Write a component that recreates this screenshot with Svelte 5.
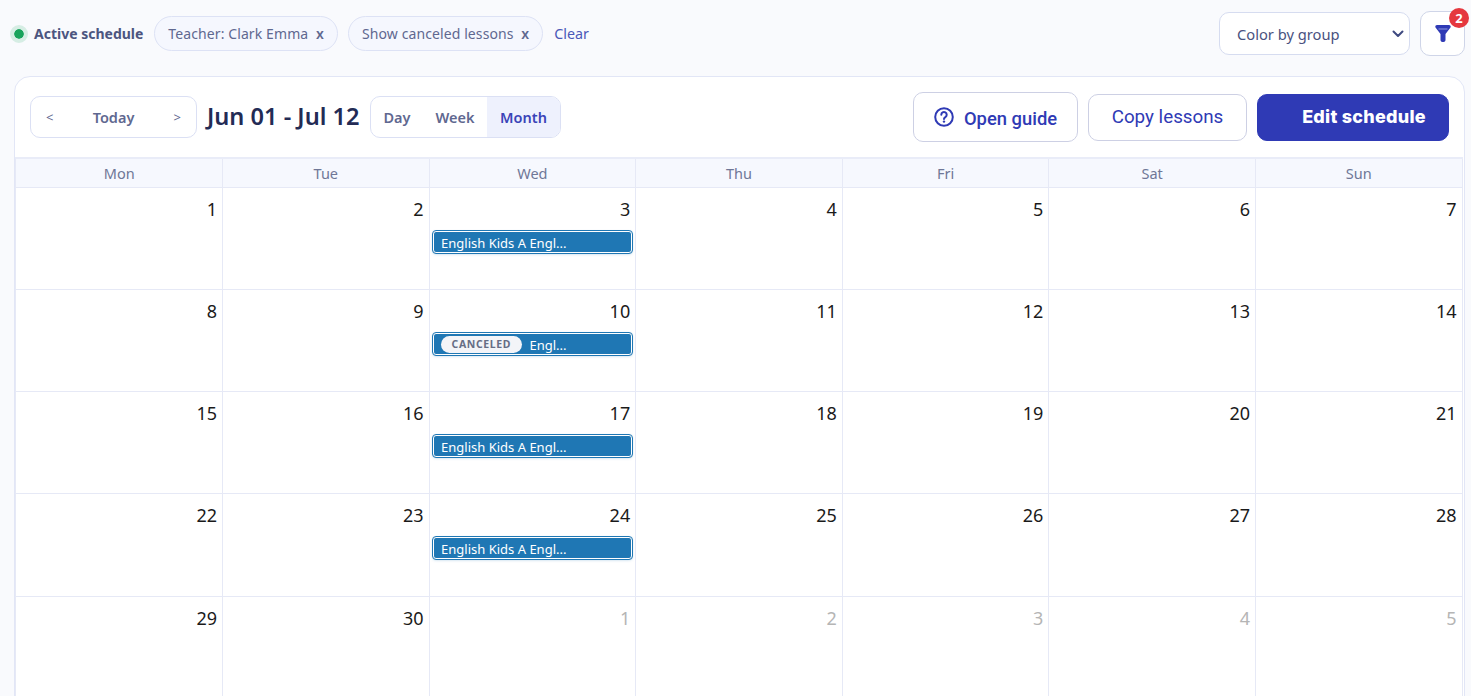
<script>
  const weekdays = ['Mon', 'Tue', 'Wed', 'Thu', 'Fri', 'Sat', 'Sun'];

  const lessons = {
    3: { title: 'English Kids A Engl...' },
    10: { title: 'Engl...', canceled: true },
    17: { title: 'English Kids A Engl...' },
    24: { title: 'English Kids A Engl...' }
  };

  const days = [];
  for (let d = 1; d <= 30; d++) days.push({ n: d, muted: false, lesson: lessons[d] });
  for (let d = 1; d <= 5; d++) days.push({ n: d, muted: true });
</script>

<div class="page">
  <div class="toolbar">
    <div class="filters">
      <span class="dot"></span>
      <span class="active-label">Active schedule</span>
      <span class="chip">Teacher: Clark Emma <b>x</b></span>
      <span class="chip">Show canceled lessons <b>x</b></span>
      <span class="clear">Clear</span>
    </div>
    <div class="right">
      <div class="select">
        <span>Color by group</span>
        <svg width="12" height="8" viewBox="0 0 12 8"><path d="M1.500 1.500 6 6l4.500-4.500" fill="none" stroke="#3f4a80" stroke-width="2" stroke-linecap="round" stroke-linejoin="round"/></svg>
      </div>
      <button class="filter-btn" aria-label="Filters">
        <svg width="16" height="17" viewBox="0 0 16 17"><path d="M2 0h12c1.500 0 2.200 1.600 1.300 2.800L10.500 9v6c0 1-.9 2-2 2h-1c-1.100 0-2-1-2-2V9L.7 2.800C-.2 1.600.5 0 2 0Z" fill="#2f3ab5"/><rect x="3.500" y="3.500" width="9" height="1" fill="#8f97de"/></svg>
        <span class="badge">2</span>
      </button>
    </div>
  </div>

  <div class="card">
    <div class="head">
      <div class="nav">
        <span class="arrow">&lt;</span>
        <span class="today">Today</span>
        <span class="arrow">&gt;</span>
      </div>
      <h2>Jun 01 - Jul 12</h2>
      <div class="views">
        <span>Day</span>
        <span>Week</span>
        <span class="on">Month</span>
      </div>
      <div class="actions">
        <button class="btn guide">
          <svg width="20" height="20" viewBox="0 0 20 20" fill="none" stroke="#2f3ab5" stroke-width="2"><circle cx="10" cy="10" r="8.800"/><path d="M7.300 7.800a2.700 2.700 0 1 1 4.100 2.300c-.9.6-1.400 1-1.400 2" stroke-linecap="round"/><circle cx="10" cy="14.600" r="1.200" fill="#2f3ab5" stroke="none"/></svg>
          Open guide
        </button>
        <button class="btn copy">Copy lessons</button>
        <button class="btn edit">Edit schedule</button>
      </div>
    </div>

    <div class="weekdays">
      {#each weekdays as w}
        <div class="wd">{w}</div>
      {/each}
    </div>
    <div class="grid">
      {#each days as day}
        <div class="cell">
          <div class="num" class:muted={day.muted}>{day.n}</div>
          {#if day.lesson}
            <div class="lesson">
              {#if day.lesson.canceled}<span class="canceled">CANCELED</span>{/if}
              <span>{day.lesson.title}</span>
            </div>
          {/if}
        </div>
      {/each}
    </div>
  </div>
</div>

<style>
  :global(body) {
    margin: 0;
    background: #f9fafd;
    font-family: "Noto Sans", "Open Sans", sans-serif;
    overflow: hidden;
  }

  .page {
    height: 696px;
    overflow: hidden;
  }

  .toolbar {
    height: 76px;
    display: flex;
    justify-content: space-between;
    padding: 11px 6px 0 10px;
    box-sizing: border-box;
  }

  .filters {
    display: flex;
    align-items: center;
    height: 45px;
  }

  .dot {
    flex: none;
    width: 10px;
    height: 10px;
    border: 4px solid #d6ede4;
    border-radius: 50%;
    background: #19a35c;
    background-clip: padding-box;
  }

  .active-label {
    margin-left: 6px;
    margin-right: 1px;
    font-size: 14px;
    font-weight: 700;
    color: #4c5580;
  }

  .chip {
    margin-left: 10px;
    height: 35px;
    padding: 0 13px;
    display: flex;
    align-items: center;
    gap: 4px;
    box-sizing: border-box;
    border: 1px solid #dde2f5;
    border-radius: 18px;
    background: #f5f7fe;
    font-size: 14px;
    letter-spacing: 0.1px;
    color: #5f6890;
    white-space: pre;
  }

  .chip b {
    font-weight: 600;
    color: #5f6890;
  }

  .clear {
    margin-left: 11px;
    font-size: 14.300px;
    color: #4b59b8;
  }

  .right {
    display: flex;
    gap: 10px;
    align-items: flex-start;
  }

  .select {
    margin-top: 1px;
    width: 191px;
    height: 43px;
    box-sizing: border-box;
    padding: 1px 5px 0 17px;
    display: flex;
    align-items: center;
    justify-content: space-between;
    background: #fff;
    border: 1px solid #d6dcf0;
    border-radius: 10px;
    font-size: 14.700px;
    color: #4a5280;
  }

  .filter-btn {
    position: relative;
    width: 45px;
    height: 45px;
    padding: 0;
    display: flex;
    align-items: center;
    justify-content: center;
    background: #fff;
    border: 1px solid #cfd5e8;
    border-radius: 10px;
  }

  .badge {
    position: absolute;
    top: -4px;
    right: -5px;
    width: 20px;
    height: 20px;
    border-radius: 50%;
    background: #e5383f;
    color: #fff;
    font-family: "Noto Sans", sans-serif;
    font-size: 13px;
    font-weight: 700;
    line-height: 20px;
    text-align: center;
  }

  .card {
    margin: 0 6px 0 14px;
    background: #fff;
    border: 1px solid #e2e6f6;
    border-radius: 16px 16px 0 0;
    height: 640px;
    box-sizing: border-box;
    overflow: hidden;
  }

  .head {
    height: 80px;
    display: flex;
    align-items: center;
    padding: 0 15px;
  }

  .nav {
    width: 167px;
    height: 42px;
    box-sizing: border-box;
    display: flex;
    align-items: center;
    justify-content: space-between;
    padding: 0 15px;
    border: 1px solid #dbe0f4;
    border-radius: 10px;
    font-size: 14.500px;
    color: #5f6890;
  }

  .today {
    font-weight: 600;
  }

  .arrow {
    font-size: 13px;
  }

  h2 {
    margin: 0 10px;
    width: 153px;
    font-size: 23.600px;
    font-weight: 600;
    line-height: 1;
    color: #232b55;
    white-space: nowrap;
  }

  .views {
    display: flex;
    height: 42px;
    box-sizing: border-box;
    border: 1px solid #dbe0f4;
    border-radius: 10px;
    overflow: hidden;
    font-size: 14.500px;
    font-weight: 600;
    color: #5f6890;
  }

  .views span {
    display: flex;
    align-items: center;
    padding: 0 12.500px;
  }

  .views .on {
    background: #eef1fd;
    color: #3a44b8;
    padding: 0 13px;
  }

  .actions {
    margin-left: auto;
    display: flex;
    align-items: center;
    gap: 10px;
  }

  .btn {
    box-sizing: border-box;
    height: 47px;
    font-family: Roboto, sans-serif;
    font-size: 18.800px;
    border-radius: 10px;
    background: #fff;
    color: #2f3ab5;
    border: 1px solid #cdd0e4;
    padding: 0;
  }

  .guide {
    width: 165px;
    height: 50px;
    display: flex;
    align-items: center;
    justify-content: center;
    gap: 10px;
    font-size: 18.400px;
    font-weight: 500;
    padding: 2px 0 0;
  }

  .guide svg {
    margin-top: -2px;
  }

  .copy {
    width: 159px;
  }

  .edit {
    width: 192px;
    background: #2f3ab5;
    border-color: #2f3ab5;
    color: #fff;
    font-family: Inter, Roboto, sans-serif;
    font-size: 18px;
    font-weight: 800;
    letter-spacing: 0.25px;
    padding: 0 0 2px 22px;
  }

  .weekdays {
    display: grid;
    grid-template-columns: repeat(7, 1fr);
    height: 30.800px;
    box-sizing: border-box;
    border-top: 2px solid #e9ecf8;
    border-bottom: 1px solid #e6e9f6;
    border-left: 1px solid #e6e9f6;
    margin-right: 1.400px;
    padding-left: 0.400px;
    background: #f6f8fe;
    font-size: 14.500px;
    color: #6f7797;
  }

  .wd {
    display: flex;
    align-items: center;
    justify-content: center;
    border-right: 1px solid #e6e9f6;
  }

  .grid {
    display: grid;
    grid-template-columns: repeat(7, 1fr);
    grid-auto-rows: 102.200px;
    border-left: 1px solid #e6e9f6;
    margin-right: 1.400px;
    padding-left: 0.400px;
  }

  .cell {
    border-right: 1px solid #e6e9f6;
    border-bottom: 1px solid #e6e9f6;
    padding: 6px 5px 0 3px;
    box-sizing: border-box;
    min-width: 0;
  }

  .num {
    text-align: right;
    font-size: 18px;
    line-height: 30px;
    color: #1a1a1a;
  }

  .num.muted {
    color: #b5b5b5;
  }

  .lesson {
    margin: 7px -2px 0 0;
    height: 22px;
    box-sizing: border-box;
    display: flex;
    align-items: center;
    gap: 8px;
    padding: 2px 0 0 7.500px;
    background: #1f77b4;
    border: 1px solid #fff;
    outline: 1px solid #1f77b4;
    border-radius: 3px;
    box-shadow: 0 1px 3px rgba(31, 119, 180, 0.35);
    color: #fff;
    font-size: 13px;
    white-space: nowrap;
    overflow: hidden;
  }

  .canceled {
    padding: 0 10.500px;
    height: 17px;
    line-height: 17px;
    background: #f3f4f8;
    border-radius: 9px;
    color: #666d85;
    font-size: 10.500px;
    font-weight: 700;
    letter-spacing: 0.6px;
  }
</style>
